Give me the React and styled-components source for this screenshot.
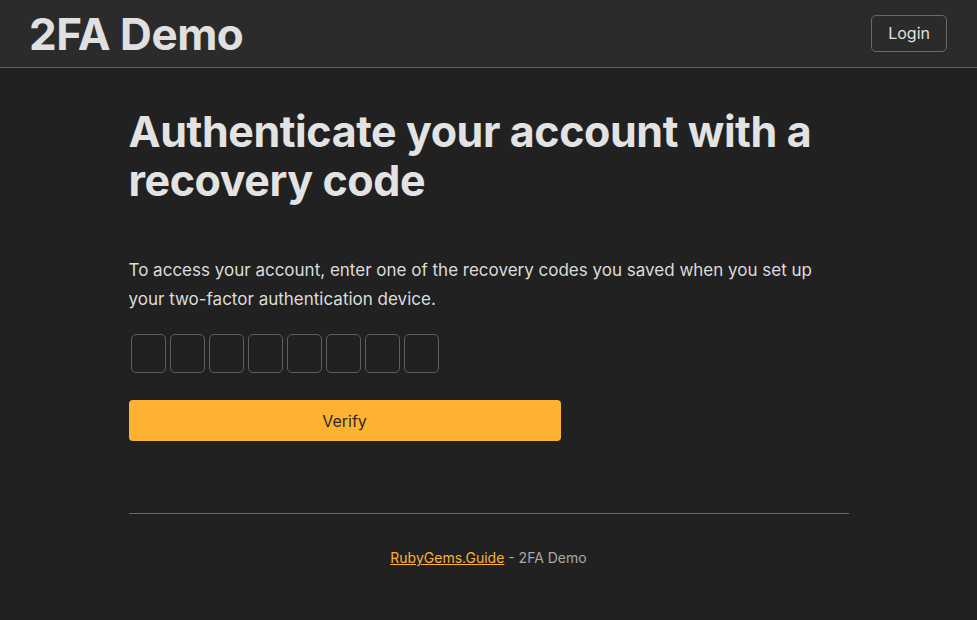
import React from "react"
import styled, { createGlobalStyle } from "styled-components"

const GlobalStyle = createGlobalStyle`
  html, body {
    margin: 0;
    padding: 0;
    background: #212121;
  }
  body {
    font-family: Inter, "Noto Sans", sans-serif;
    color: #e0e0e0;
  }
`

const Page = styled.div`
  min-height: 620px;
  background: #212121;
`

const Header = styled.header`
  height: 67px;
  background: #2b2b2b;
  border-bottom: 1px solid #5e5e5e;
  display: flex;
  align-items: center;
  justify-content: space-between;
  padding: 0 30px 0 29px;
`

const Brand = styled.div`
  font-size: 44px;
  font-weight: 700;
  letter-spacing: -0.01em;
  color: #e0e0e0;
`

const LoginButton = styled.button`
  height: 37px;
  padding: 0 16px;
  background: transparent;
  border: 1px solid #6a6a6a;
  border-radius: 5px;
  color: #e0e0e0;
  font-family: Inter, sans-serif;
  font-size: 16px;
  margin-top: -1px;
`

const Main = styled.main`
  width: 720px;
  margin: 0 auto;
  padding-top: 39px;
`

const Title = styled.h1`
  margin: 0;
  font-size: 43px;
  line-height: 49px;
  font-weight: 700;
  letter-spacing: -0.01em;
  color: #e3e3e3;
`

const Lead = styled.p`
  margin: 51px 0 0;
  font-size: 17px;
  line-height: 29px;
  color: #dcdcdc;
`

const CodeRow = styled.div`
  display: flex;
  gap: 4px;
  margin: 20px 0 0 2px;
`

const CodeBox = styled.input`
  width: 35px;
  height: 39px;
  box-sizing: border-box;
  background: transparent;
  border: 1px solid #5f5f5f;
  border-radius: 5px;
  color: #e0e0e0;
  font-family: Inter, sans-serif;
  font-size: 16px;
  text-align: center;
  padding: 0;
`

const VerifyButton = styled.button`
  display: block;
  width: 432px;
  height: 41px;
  margin-top: 27px;
  background: #ffb232;
  border: none;
  border-radius: 4px;
  color: #2a2a2a;
  font-family: Inter, sans-serif;
  font-size: 16px;
`

const Divider = styled.hr`
  margin: 72px 0 0;
  border: none;
  border-top: 1px solid #6a6a6a;
`

const Footer = styled.footer`
  text-align: center;
  padding-top: 35px;
  font-size: 14px;
  color: #a8a8a8;
`

const FooterLink = styled.a`
  color: #ffb232;
  text-decoration: underline;
`

export default function App() {
  const slots = Array.from({ length: 8 })
  return (
    <>
      <GlobalStyle />
      <Page>
        <Header>
          <Brand>2FA Demo</Brand>
          <LoginButton>Login</LoginButton>
        </Header>
        <Main>
          <Title>Authenticate your account with a recovery code</Title>
          <Lead>
            To access your account, enter one of the recovery codes you saved when you set up
            your two-factor authentication device.
          </Lead>
          <CodeRow>
            {slots.map((_, i) => (
              <CodeBox key={i} maxLength={1} />
            ))}
          </CodeRow>
          <VerifyButton>Verify</VerifyButton>
          <Divider />
          <Footer>
            <FooterLink href="#">RubyGems.Guide</FooterLink> - 2FA Demo
          </Footer>
        </Main>
      </Page>
    </>
  )
}
